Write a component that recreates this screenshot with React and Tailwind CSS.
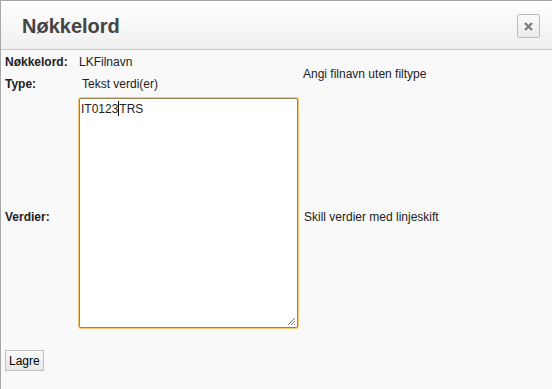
export default function App() {
  return (
    <div
      className="w-[552px] h-[389px] overflow-hidden bg-[#f9f9f9] border-t border-l border-[#a8a8a8] flex flex-col text-[12px] text-[#222]"
      style={{ fontFamily: '"Liberation Sans", Arial, sans-serif' }}
    >
      <div className="h-[49px] shrink-0 flex items-center justify-between pl-[21px] pr-[12px] border-b border-[#c8c8c8] bg-gradient-to-b from-[#ffffff] to-[#efefef]">
        <h1 className="text-[20px] font-bold text-[#444] leading-none pt-[1px]">Nøkkelord</h1>
        <button className="w-[23px] h-[24px] mt-[2px] rounded-[2px] border border-[#bcbcbc] bg-gradient-to-b from-[#fafafa] to-[#ececec] flex items-center justify-center">
          <svg width="9" height="9" viewBox="0 0 9 9">
            <path d="M1 1L8 8M8 1L1 8" stroke="#7a7a7a" strokeWidth="2.2" />
          </svg>
        </button>
      </div>

      <div className="grid grid-cols-[74px_223px_1fr] pl-[4px] pt-[1px]">
        <div className="h-[22px] flex items-center font-bold">Nøkkelord:</div>
        <div className="h-[22px] flex items-center">LKFilnavn</div>
        <div className="row-span-2 flex items-center pl-[1px] pt-[1px]">Angi filnavn uten filtype</div>

        <div className="h-[22px] flex items-center font-bold">Type:</div>
        <div className="h-[22px] flex items-center pl-[3px]">Tekst verdi(er)</div>

        <div className="flex items-center font-bold pt-[10px]">Verdier:</div>
        <div className="pt-[3px]">
          <div className="relative w-[219px] h-[230px] bg-white border border-[#9a8550] rounded-[2px] shadow-[0_0_0_1px_#f0c878] px-[1px] pt-[1px]">
            <span className="leading-[15px]">
              IT0123<span className="inline-block w-px h-[15px] bg-black align-[-3px]"></span>TRS
            </span>
            <svg className="absolute right-[1px] bottom-[1px]" width="10" height="10" viewBox="0 0 10 10">
              <path d="M9 2L2 9M9 5L5 9M9 8L8 9" stroke="#777" strokeWidth="1" />
            </svg>
          </div>
        </div>
        <div className="flex items-center pl-[2px] pt-[10px]">Skill verdier med linjeskift</div>
      </div>

      <div className="pl-[4px] pt-[22px]">
        <button className="h-[21px] px-[3px] border border-[#c0c0c0] bg-gradient-to-b from-[#fafafa] to-[#e8e8e8] text-[12px] text-black leading-none">
          Lagre
        </button>
      </div>
    </div>
  );
}
